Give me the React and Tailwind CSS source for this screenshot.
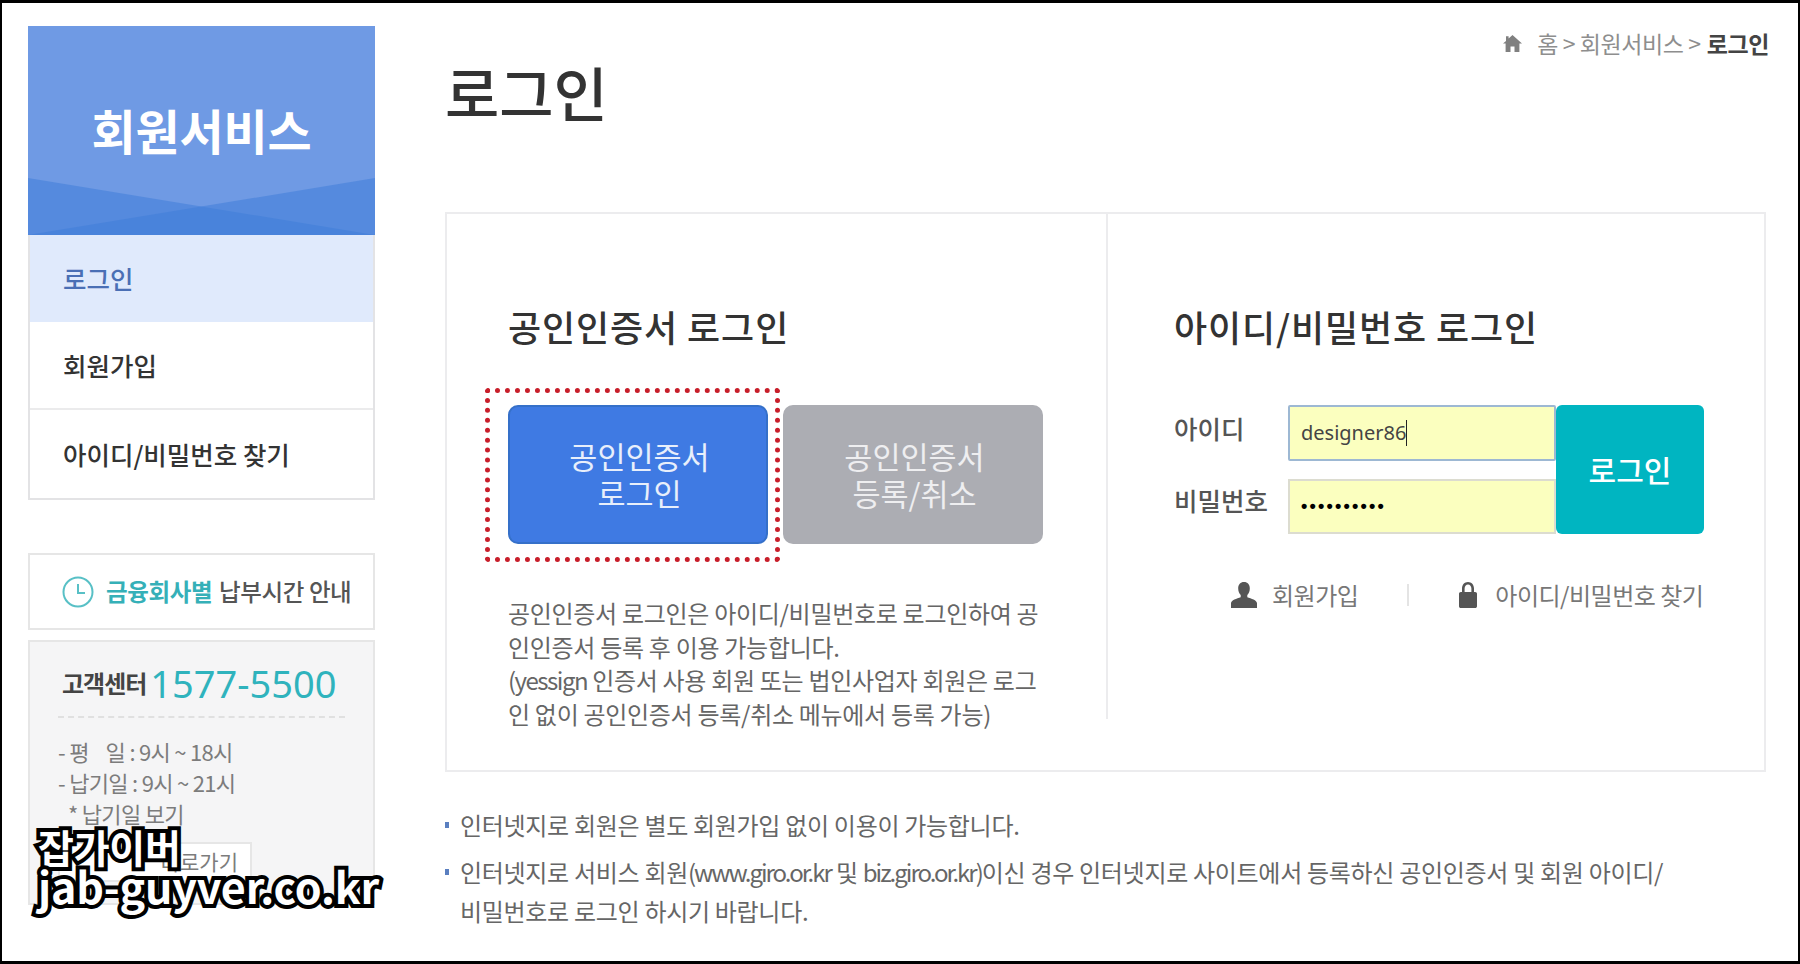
const FONT = "font-['Noto_Sans_CJK_KR','Noto_Sans',sans-serif]";

function HomeIcon() {
  return (
    <svg className="mr-[15px]" width="19" height="17" viewBox="0 0 19 17" fill="#808080">
      <path d="M9.5 0 19 8.6h-2.6V17h-4.9v-5.6h-4V17H2.6V8.6H0L3 5.9V1.2h2.6v2.4z" />
    </svg>
  );
}

function PersonIcon() {
  return (
    <svg className="ml-[57px] shrink-0" width="26" height="26" viewBox="0 0 26 26" fill="#555">
      <path d="M13 0c3.6 0 5.8 2.6 5.8 6.4 0 2.8-1 5.2-2.5 6.6v2.2c3.8 1.2 9.7 3 9.7 6V26H0v-4.800c0-3 5.900-4.800 9.700-6V13C8.200 11.600 7.200 9.200 7.200 6.400 7.200 2.600 9.400 0 13 0z" />
    </svg>
  );
}

function LockIcon() {
  return (
    <svg className="ml-[50px] shrink-0" width="18" height="26" viewBox="0 0 18 26" fill="#555">
      <path d="M3 10V6.500C3 2.800 5.500 0 9 0s6 2.800 6 6.500V10h1.200c1 0 1.800.8 1.800 1.800v12.400c0 1-.8 1.800-1.800 1.800H1.800C.8 26 0 25.200 0 24.200V11.800C0 10.800.8 10 1.800 10zm2.600 0h6.800V6.500C12.400 4.200 11 2.500 9 2.500S5.600 4.200 5.600 6.500z" />
    </svg>
  );
}

function SideHeader() {
  return (
    <div className="relative h-[209px] bg-[#6f9ae4] flex justify-center pt-[73px] overflow-hidden">
      <svg className="absolute left-0 bottom-0" width="347" height="57" viewBox="0 0 347 57" preserveAspectRatio="none">
        <polygon points="0,0 347,57 0,57" fill="#3f7dd8" fillOpacity="0.55" />
        <polygon points="347,0 0,57 347,57" fill="#3f7dd8" fillOpacity="0.55" />
      </svg>
      <h2 className="relative text-white text-[48px] leading-[60px] font-bold tracking-[-0.2px] whitespace-nowrap">회원서비스</h2>
    </div>
  );
}

function SideMenu() {
  return (
    <ul className="border-x-2 border-b-2 border-[#e3e3e5] text-[25.5px] font-medium">
      <li className="h-[87px] bg-[#e0eafc] text-[#4a6fb5] flex items-center pl-[33px]">로그인</li>
      <li className="h-[88px] text-[#333] flex items-center pl-[33px] border-b-2 border-[#ebebec]">회원가입</li>
      <li className="h-[88px] text-[#333] flex items-center pl-[33px]">아이디/비밀번호 찾기</li>
    </ul>
  );
}

function TimeBox() {
  return (
    <div className="mt-[53px] h-[77px] border-2 border-[#e6e6e6] flex items-center pl-[32px] text-[23.5px] font-medium tracking-[-0.4px] whitespace-nowrap">
      <svg className="mr-[12px] shrink-0" width="32" height="32" viewBox="0 0 32 32" fill="none" stroke="#58c0c6" strokeWidth="2">
        <circle cx="16" cy="16" r="14.5" />
        <path d="M16 8v9h7" />
      </svg>
      <span className="text-[#35b0b8] font-bold">금융회사별</span>
      <span className="ml-[7px] text-[#555]">납부시간 안내</span>
    </div>
  );
}

function CallCenter() {
  return (
    <div className="mt-[10px] h-[265px] border-2 border-[#e6e6e6] bg-[#f5f5f6] px-[28px] text-[#7c7c7c] text-[22px]">
      <div className="flex items-center h-[76px] pt-[8px] border-b-2 border-dashed border-[#e0e0e0] whitespace-nowrap">
        <span className="ml-[4px] text-[#444] text-[24px] font-bold tracking-[-1px]">고객센터</span>
        <span className="ml-[4px] text-[#2fb3bd] text-[38px] leading-none font-['Noto_Sans']">1577-5500</span>
      </div>
      <div className="mt-[18px] leading-[31px] tracking-[-0.7px]">
        <p className="whitespace-pre">- 평    일 : 9시 ~ 18시</p>
        <p>- 납기일 : 9시 ~ 21시</p>
        <p className="pl-[10px]">* 납기일 보기</p>
      </div>
      <div className="mt-[13px] w-[194px] h-[40px] bg-white border-2 border-[#e6e6e6] flex items-center justify-end pr-[12px] text-[21px]">바로가기</div>
    </div>
  );
}

function CertPanel() {
  return (
    <div className="relative w-[661px] shrink-0 h-[505px] border-r-2 border-[#ececee] pl-[61px] pt-[87px]">
      <h3 className="text-[#333] text-[36px] leading-[50px] font-medium tracking-[0.9px] whitespace-nowrap">공인인증서 로그인</h3>
      <div className="mt-[54px] flex gap-[15px] text-[30.5px] leading-[37px] text-center">
        <button className="w-[260px] h-[139px] pl-[3px] rounded-[10px] bg-[#3f7ae3] border-2 border-[#3570c9] text-[#e8effb]">공인인증서<br />로그인</button>
        <button className="w-[260px] h-[139px] pl-[3px] rounded-[10px] bg-[#acadb3] text-[#eeeef0]">공인인증서<br />등록/취소</button>
      </div>
      <div className="absolute left-[38px] top-[174px] w-[295px] h-[174px] rounded-[4px] border-[5px] border-dotted border-[#c81e2a]" />
      <p className="mt-[52px] w-[560px] text-[#666] text-[24px] leading-[33.7px] tracking-[-0.3px] whitespace-nowrap">
        공인인증서 로그인은 아이디/비밀번호로 로그인하여 공<br />
        인인증서 등록 후 이용 가능합니다.<br />
        <span className="tracking-[-1.5px]">(yessign</span> 인증서 사용 회원 또는 법인사업자 회원은 로그<br />
        인 없이 공인인증서 등록/취소 메뉴에서 등록 가능)
      </p>
    </div>
  );
}

function IdPanel() {
  return (
    <div className="pl-[66px] pt-[87px]">
      <h3 className="text-[#333] text-[36px] leading-[50px] font-medium tracking-[0.9px] whitespace-nowrap">아이디/비밀번호 로그인</h3>
      <div className="mt-[54px] flex">
        <div className="w-[114px] text-[#555] text-[25.5px] font-medium whitespace-nowrap">
          <div className="h-[46px] flex items-center">아이디</div>
          <div className="h-[46px] flex items-center mt-[26px]">비밀번호</div>
        </div>
        <div className="w-[268px]">
          <div className="h-[56px] bg-[#fbffbf] border-2 border-[#9db8d3] rounded-[2px] flex items-center pl-[11px] text-[#444] text-[20px] font-['Noto_Sans']">
            designer86<span className="w-px h-[26px] bg-[#222]" />
          </div>
          <div className="mt-[18px] h-[55px] bg-[#fbffbf] border-2 border-[#dcdcd0] flex items-center pl-[11px] text-black text-[18px] font-bold tracking-[2.2px] font-['Liberation_Sans']">
            ••••••••••
          </div>
        </div>
        <button className="w-[148px] h-[129px] rounded-[6px] bg-[#00b5c1] text-white text-[30px] font-medium">로그인</button>
      </div>
      <div className="mt-[43px] flex items-center text-[#777] text-[24px] tracking-[-0.5px] whitespace-nowrap">
        <PersonIcon />
        <span className="ml-[15px]">회원가입</span>
        <span className="ml-[49px] w-[2px] h-[22px] bg-[#e4e4e4]" />
        <LockIcon />
        <span className="ml-[18px]">아이디/비밀번호 찾기</span>
      </div>
    </div>
  );
}

function Notes() {
  return (
    <ul className="mt-[33px] text-[#666] text-[24px] tracking-[-0.3px]">
      <li className="relative pl-[15px] leading-[40px] whitespace-nowrap before:content-[''] before:absolute before:left-0 before:top-[17px] before:w-[4px] before:h-[6px] before:bg-[#5a7fc0]">
        인터넷지로 회원은 별도 회원가입 없이 이용이 가능합니다.
      </li>
      <li className="relative mt-[7px] pl-[15px] leading-[39px] whitespace-nowrap before:content-[''] before:absolute before:left-0 before:top-[17px] before:w-[4px] before:h-[6px] before:bg-[#5a7fc0]">
        인터넷지로 서비스 회원<span className="tracking-[-2px]">(www.giro.or.kr</span> 및 <span className="tracking-[-2px]">biz.giro.or.kr)</span>이신 경우 인터넷지로 사이트에서 등록하신 공인인증서 및 회원 아이디/<br />
        비밀번호로 로그인 하시기 바랍니다.
      </li>
    </ul>
  );
}

export default function App() {
  return (
    <div className={`relative w-[1800px] h-[964px] overflow-hidden bg-white border-y-[3px] border-x-2 border-black flex ${FONT}`}>
      <aside className="ml-[26px] mt-[23px] w-[347px] shrink-0">
        <SideHeader />
        <SideMenu />
        <TimeBox />
        <CallCenter />
      </aside>

      <main className="relative ml-[70px] w-[1321px] shrink-0">
        <div className="absolute right-[-3px] top-[25px] flex items-center text-[#8e8e8e] text-[23px] leading-[30px] tracking-[-0.4px] whitespace-nowrap">
          <HomeIcon />
          <span>홈 &gt; 회원서비스 &gt;</span>
          <span className="ml-[6px] text-[#444] font-bold">로그인</span>
        </div>
        <h1 className="mt-[44px] h-[165px] text-[#333] text-[59px] leading-[90px] font-medium">로그인</h1>
        <section className="h-[560px] border-2 border-[#ececee] flex">
          <CertPanel />
          <IdPanel />
        </section>
        <Notes />
      </main>

      <div className="absolute left-[36px] top-[823px] text-white font-bold tracking-[-0.2px] [-webkit-text-stroke:8px_black] [paint-order:stroke_fill] whitespace-nowrap">
        <div className="text-[39px] leading-[40px]">잡가이버</div>
        <div className="text-[43px] leading-[38px]">jab-guyver.co.kr</div>
      </div>
    </div>
  );
}
